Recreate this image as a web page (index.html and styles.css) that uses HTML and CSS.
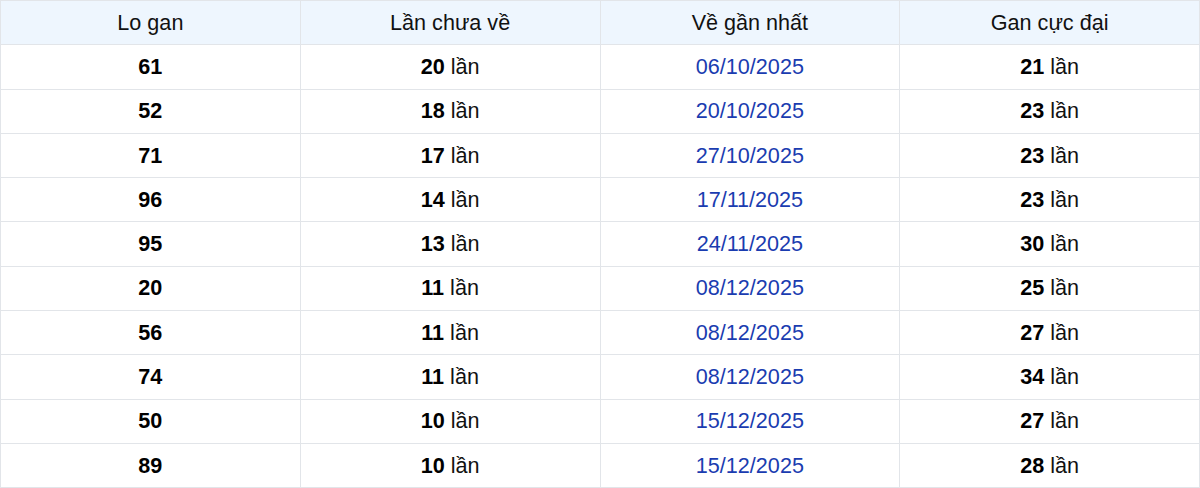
FILE: index.html
```html
<!DOCTYPE html>
<html>
<head>
<meta charset="utf-8">
<link rel="stylesheet" href="styles.css">
</head>
<body>
<table class="gan">
<thead>
<tr><th>Lo gan</th><th>Lần chưa về</th><th>Về gần nhất</th><th>Gan cực đại</th></tr>
</thead>
<tbody>
<tr><td><b>61</b></td><td><b>20</b> lần</td><td class="date">06/10/2025</td><td><b>21</b> lần</td></tr>
<tr><td><b>52</b></td><td><b>18</b> lần</td><td class="date">20/10/2025</td><td><b>23</b> lần</td></tr>
<tr><td><b>71</b></td><td><b>17</b> lần</td><td class="date">27/10/2025</td><td><b>23</b> lần</td></tr>
<tr><td><b>96</b></td><td><b>14</b> lần</td><td class="date">17/11/2025</td><td><b>23</b> lần</td></tr>
<tr><td><b>95</b></td><td><b>13</b> lần</td><td class="date">24/11/2025</td><td><b>30</b> lần</td></tr>
<tr><td><b>20</b></td><td><b>11</b> lần</td><td class="date">08/12/2025</td><td><b>25</b> lần</td></tr>
<tr><td><b>56</b></td><td><b>11</b> lần</td><td class="date">08/12/2025</td><td><b>27</b> lần</td></tr>
<tr><td><b>74</b></td><td><b>11</b> lần</td><td class="date">08/12/2025</td><td><b>34</b> lần</td></tr>
<tr><td><b>50</b></td><td><b>10</b> lần</td><td class="date">15/12/2025</td><td><b>27</b> lần</td></tr>
<tr><td><b>89</b></td><td><b>10</b> lần</td><td class="date">15/12/2025</td><td><b>28</b> lần</td></tr>
</tbody>
</table>
</body>
</html>
```
FILE: styles.css
```css
html, body { margin: 0; padding: 0; background: #fff; }
body { font-family: "Liberation Sans", Arial, sans-serif; color: #111; }
.gan { width: 1200px; border-collapse: collapse; table-layout: fixed; }
.gan th, .gan td {
  border: 1px solid #e2e5e9;
  text-align: center;
  font-size: 21.6px;
  height: 44.3px;
  padding: 0;
  box-sizing: border-box;
}
.gan th { background: #eef6fe; font-weight: 400; color: #111; }
.gan td b { font-weight: 700; color: #000; }
.gan td.date { color: #1a3cb0; }
```
